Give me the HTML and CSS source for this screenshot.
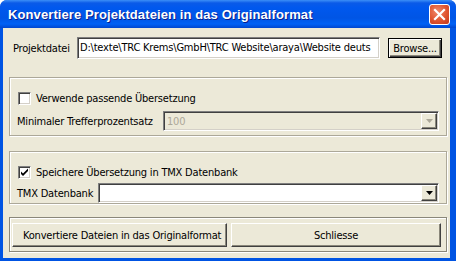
FILE: index.html
```html
<!DOCTYPE html>
<html lang="de">
<head>
    <meta charset="UTF-8">
    <title>Konvertiere Projektdateien in das Originalformat</title>
    <link rel="stylesheet" href="styles.css">
</head>
<body>
    <div class="window">
        <div class="titlebar">
            <span class="title">Konvertiere Projektdateien in das Originalformat</span>
            <div class="close-btn">
                <svg width="13" height="13" viewBox="0 0 13 13">
                    <path d="M2 2 L11 11 M11 2 L2 11" stroke="#fff" stroke-width="2.2" stroke-linecap="square"/>
                </svg>
            </div>
        </div>

        <div class="client">
            <div class="file-row">
                <span class="label">Projektdatei</span>
                <div class="textbox file-path">D:\texte\TRC Krems\GmbH\TRC Website\araya\Website deuts</div>
                <div class="button default-button browse">Browse...</div>
            </div>

            <div class="group group-match">
                <div class="check-row">
                    <span class="checkbox"></span>
                    <span>Verwende passende Übersetzung</span>
                </div>
                <div class="field-row">
                    <span class="label">Minimaler Trefferprozentsatz</span>
                    <div class="combo disabled">
                        <span class="combo-text">100</span>
                        <span class="combo-arrow">
                            <svg width="7" height="4" viewBox="0 0 7 4"><path d="M0 0 H7 L3.5 4 Z" fill="#aca899"/></svg>
                        </span>
                    </div>
                </div>
            </div>

            <div class="group group-tmx">
                <div class="check-row">
                    <span class="checkbox">
                        <svg width="9" height="9" viewBox="0 0 9 9"><path d="M1 3.5 L3 5.5 L8 0.5 V3 L3 8 L1 6 Z" fill="#000"/></svg>
                    </span>
                    <span>Speichere Übersetzung in TMX Datenbank</span>
                </div>
                <div class="field-row">
                    <span class="label">TMX Datenbank</span>
                    <div class="combo">
                        <span class="combo-text"></span>
                        <span class="combo-arrow">
                            <svg width="7" height="4" viewBox="0 0 7 4"><path d="M0 0 H7 L3.5 4 Z" fill="#000"/></svg>
                        </span>
                    </div>
                </div>
            </div>

            <div class="group group-buttons">
                <div class="button convert">Konvertiere Dateien in das Originalformat</div>
                <div class="button close">Schliesse</div>
            </div>
        </div>
    </div>
</body>
</html>
```

FILE: styles.css
```css
* {
    box-sizing: border-box;
    margin: 0;
    padding: 0;
}

body {
    background: #ffffff;
    font-family: 'DejaVu Sans Condensed', 'Liberation Sans', sans-serif;
    font-size: 11px;
    letter-spacing: -0.2px;
    color: #000000;
}

.window {
    width: 456px;
    height: 261px;
    background: #0054e3;
    border-radius: 7px 7px 0 0;
    display: flex;
    flex-direction: column;
    overflow: hidden;
}

.titlebar {
    height: 28px;
    display: flex;
    align-items: center;
    justify-content: space-between;
    padding: 0 6px 0 8px;
    background: linear-gradient(to bottom, #3c8ff7 0, #0a5ae8 3px, #0058ee 8px, #0055e5 18px, #0061f5 24px, #0046cf 28px);
}

.title {
    color: #ffffff;
    font-family: 'Liberation Sans', Arial, sans-serif;
    font-weight: bold;
    font-size: 13px;
    letter-spacing: 0.1px;
    text-shadow: 1px 1px 0 #0a1e8c;
    white-space: nowrap;
}

.close-btn {
    width: 21px;
    height: 21px;
    margin-top: 1px;
    border: 1px solid #ffffff;
    border-radius: 3px;
    background: radial-gradient(circle at 40% 35%, #f08a6c 0, #e0542f 55%, #c2381b 100%);
    display: flex;
    align-items: center;
    justify-content: center;
}

.client {
    flex: 1;
    margin: 0 6px 3px 3px;
    background: #ece9d8;
    padding: 9px 3px 5px 6px;
    display: flex;
    flex-direction: column;
}

.file-row {
    display: flex;
    align-items: center;
    height: 22px;
    padding-left: 4px;
}

.file-row .label {
    width: 64px;
}

.textbox {
    background: #ffffff;
    border: 1px solid;
    border-color: #7f7f7f #ffffff #ffffff #7f7f7f;
    box-shadow: inset 1px 1px 0 #404040, inset -1px -1px 0 #d4d0c8;
    height: 22px;
    line-height: 19px;
    padding-left: 2px;
    white-space: nowrap;
    overflow: hidden;
}

.file-path {
    width: 303px;
}

.button {
    background: #ece9d8;
    border: 1px solid;
    border-color: #ffffff #404040 #404040 #ffffff;
    box-shadow: inset -1px -1px 0 #8a877a;
    display: flex;
    align-items: center;
    justify-content: center;
    white-space: nowrap;
}

.default-button {
    border: 1px solid #000000;
    box-shadow: inset 1px 1px 0 #ffffff, inset -1px -1px 0 #404040, inset -2px -2px 0 #8a877a;
}

.browse {
    width: 54px;
    height: 20px;
    margin-left: 8px;
}

.group {
    border: 1px solid #aca899;
    box-shadow: 1px 1px 0 #ffffff, inset 1px 1px 0 #ffffff;
}

.group-match {
    margin-top: 18px;
    height: 59px;
    padding: 14px 7px 0 8px;
}

.group-tmx {
    margin-top: 15px;
    height: 53px;
    padding: 14px 7px 0 8px;
}

.check-row {
    display: flex;
    align-items: center;
    gap: 5px;
    height: 13px;
}

.checkbox {
    width: 13px;
    height: 13px;
    background: #ffffff;
    border: 1px solid;
    border-color: #7f7f7f #ffffff #ffffff #7f7f7f;
    box-shadow: inset 1px 1px 0 #404040, inset -1px -1px 0 #d4d0c8;
    display: flex;
    align-items: center;
    justify-content: center;
}

.field-row {
    display: flex;
    align-items: center;
    margin-left: -1px;
}

.group-match .field-row {
    margin-top: 6px;
}

.group-tmx .field-row {
    margin-top: 4px;
}

.group-match .label {
    width: 146px;
}

.group-tmx .label {
    width: 81px;
}

.combo {
    flex: 1;
    height: 20px;
    background: #ffffff;
    border: 1px solid;
    border-color: #7f7f7f #ffffff #ffffff #7f7f7f;
    box-shadow: inset 1px 1px 0 #404040, inset -1px -1px 0 #d4d0c8;
    display: flex;
    align-items: center;
    padding: 1px 1px 1px 3px;
}

.combo.disabled {
    background: #ece9d8;
    color: #aca899;
}

.combo-text {
    flex: 1;
}

.combo-arrow {
    width: 16px;
    height: 16px;
    background: #ece9d8;
    border: 1px solid;
    border-color: #ffffff #404040 #404040 #ffffff;
    box-shadow: inset -1px -1px 0 #8a877a;
    display: flex;
    align-items: center;
    justify-content: center;
}

.group-buttons {
    margin-top: 13px;
    height: 35px;
    padding: 5px 5px 0 2px;
    display: flex;
    gap: 4px;
    border-color: #8a877a;
}

.group-buttons .button {
    height: 24px;
}

.convert {
    width: 215px;
    justify-content: flex-start;
    padding-left: 10px;
}

.close {
    flex: 1;
}
```
